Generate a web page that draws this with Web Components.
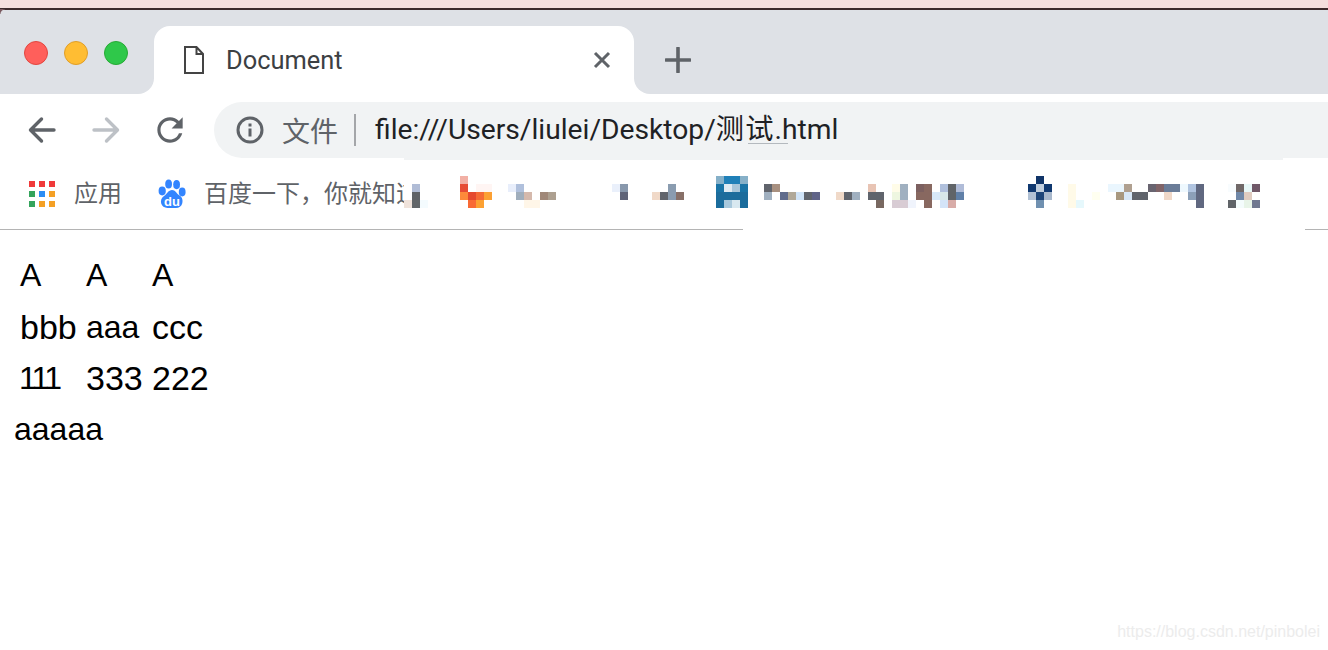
<!DOCTYPE html>
<html lang="zh">
<head>
<meta charset="utf-8">
<title>Document</title>
<style>
  html, body { margin: 0; padding: 0; background: #fff; }
  body { width: 1328px; height: 650px; overflow: hidden; font-family: "Liberation Sans", Arial, sans-serif; }
</style>
</head>
<body>
<browser-window>
  <tab-strip slot="strip" title-text="Document"></tab-strip>
  <nav-toolbar slot="toolbar" scheme="文件" url="file:///Users/liulei/Desktop/测试.html"></nav-toolbar>
  <bookmark-bar slot="bookmarks"></bookmark-bar>
  <demo-page></demo-page>
</browser-window>

<script>
function shadow(el, html) {
  const r = el.attachShadow({ mode: 'open' });
  r.innerHTML = html;
  return r;
}

class BrowserWindow extends HTMLElement {
  constructor() {
    super();
    shadow(this, `<style>
      :host { display: block; position: relative; width: 1328px; height: 650px; overflow: hidden; background: #fff; }
      .desk { height: 8px; background: #f5dfde; }
      .edge { height: 2px; background: #3d2a2c; }
      .frame { display: flex; flex-direction: column; }
      .corner { position: absolute; left: 0; top: 9px; width: 5px; height: 5px;
        background: radial-gradient(circle at 100% 100%, transparent 4px, #7a5a60 5px); }
      .mark { position: absolute; right: 8px; bottom: 9px; font: 16px/18px "Liberation Sans", sans-serif; color: #ececec; }
    </style>
    <div class="desk"></div><div class="edge"></div><div class="corner"></div>
    <div class="frame">
      <slot name="strip"></slot>
      <slot name="toolbar"></slot>
      <slot name="bookmarks"></slot>
      <slot></slot>
    </div>
    <div class="mark">https://blog.csdn.net/pinbolei</div>`);
  }
}

class TrafficLights extends HTMLElement {
  constructor() {
    super();
    shadow(this, `<style>
      :host { display: flex; gap: 16px; }
      i { display: block; width: 24px; height: 24px; border-radius: 50%; box-sizing: border-box; border: 1px solid; }
      .r { background: #ff5f5b; border-color: #e2463f; }
      .y { background: #ffbd33; border-color: #e09e28; }
      .g { background: #2fc84a; border-color: #27aa35; }
    </style><i class="r"></i><i class="y"></i><i class="g"></i>`);
  }
}

class TabStrip extends HTMLElement {
  constructor() {
    super();
    const t = this.getAttribute('title-text') || '';
    shadow(this, `<style>
      :host { display: flex; height: 84px; background: linear-gradient(#dee1e6 50%, #fff 50%); }
      .left { width: 154px; background: #dee1e6; border-bottom-right-radius: 16px; box-sizing: border-box; padding: 31px 0 0 24px; }
      .tab { width: 480px; margin-top: 16px; background: #fff; border-radius: 16px 16px 0 0; display: flex; align-items: center; box-sizing: border-box; padding: 0 22px 0 30px; color: #3c4043; }
      .tab svg.doc { flex: none; margin-right: 22px; }
      .name { flex: 1; font: 25.4px/34px Roboto, "Liberation Sans", sans-serif; white-space: nowrap; }
      .right { flex: 1; background: #dee1e6; border-bottom-left-radius: 16px; display: flex; align-items: center; padding: 16px 0 0 31px; box-sizing: border-box; }
    </style>
    <div class="left"><traffic-lights></traffic-lights></div>
    <div class="tab">
      <svg class="doc" width="20" height="28" viewBox="0 0 20 28"><path d="M1 1h11.5L19 8v19H1z M12.5 1v7H19" fill="none" stroke="#444" stroke-width="2"/></svg>
      <span class="name">${t}</span>
      <svg width="20" height="20" viewBox="0 0 20 20"><path d="M3 3l14 14M17 3L3 17" stroke="#5f6368" stroke-width="3" fill="none"/></svg>
    </div>
    <div class="right"><svg width="26" height="26" viewBox="0 0 26 26"><path d="M1 13h24M13 1v24" stroke="#5f6368" stroke-width="3.6" stroke-linecap="round" fill="none"/></svg></div>`);
  }
}

class NavToolbar extends HTMLElement {
  constructor() {
    super();
    const scheme = this.getAttribute('scheme') || '', url = this.getAttribute('url') || '';
    const urlHtml = url.replace(/[\u4e00-\u9fff]+/g, m => `<span class="cjk">${m}</span>`);
    shadow(this, `<style>
      :host { display: flex; height: 64px; align-items: flex-end; background: #fff; box-sizing: border-box; }
      .btns { display: flex; align-items: center; width: 214px; height: 56px; flex: none; box-sizing: border-box; padding-left: 27px; }
      .btns svg { display: block; flex: none; }
      .omni { flex: 1; height: 56px; background: #f1f3f4; border-radius: 28px 0 0 28px; display: flex; align-items: center; box-sizing: border-box; padding-left: 21px; }
      .scheme { margin-left: 17px; font: 28px/36px "Noto Sans CJK SC", sans-serif; color: #5f6368; white-space: nowrap; }
      .sep { width: 2px; height: 32px; background: #a4a6a9; margin: 0 19px 0 16px; flex: none; }
      .url { font: 28.2px/36px Roboto, "Noto Sans CJK SC", sans-serif; color: #202124; white-space: nowrap; padding-bottom: 1px; }
      .cjk { letter-spacing: 1.2px; }
    </style>
    <div class="btns">
      <svg width="30" height="28" viewBox="0 0 30 28"><path d="M27 14H4M14.5 3L3.5 14l11 11" fill="none" stroke="#5f6368" stroke-width="3.4" stroke-linecap="round" stroke-linejoin="round"/></svg>
      <svg style="margin-left:34px" width="30" height="28" viewBox="0 0 30 28"><path d="M3 14h23M15.5 3l11 11-11 11" fill="none" stroke="#bdc1c6" stroke-width="3.4" stroke-linecap="round" stroke-linejoin="round"/></svg>
      <svg style="margin-left:30px" width="38" height="38" viewBox="0 0 24 24"><path fill="#5f6368" d="M17.65 6.35C16.2 4.9 14.21 4 12 4c-4.42 0-7.99 3.58-7.99 8s3.57 8 7.99 8c3.73 0 6.84-2.55 7.73-6h-2.08c-.82 2.33-3.04 4-5.65 4-3.31 0-6-2.69-6-6s2.69-6 6-6c1.66 0 3.14.69 4.22 1.78L13 11h7V4l-2.35 2.35z"/></svg>
    </div>
    <div class="omni">
      <svg width="30" height="30" viewBox="0 0 30 30" style="flex:none"><circle cx="15" cy="15" r="12" fill="none" stroke="#5f6368" stroke-width="3"/><rect x="13.5" y="8.5" width="3" height="3" fill="#5f6368"/><rect x="13.5" y="13.5" width="3" height="8" fill="#5f6368"/></svg>
      <span class="scheme">${scheme}</span>
      <span class="sep"></span>
      <span class="url">${urlHtml}</span>
    </div>`);
  }
}

class AppsIcon extends HTMLElement {
  constructor() {
    super();
    const c = ['#f03a3a','#f03a3a','#f03a3a','#34a45c','#2c8df4','#f4a025','#34a45c','#f4a025','#f4a025'];
    shadow(this, `<style>
      :host { display: grid; grid-template-columns: repeat(3, 6px); grid-auto-rows: 6px; gap: 4px; flex: none; }
      i { display: block; }
    </style>` + c.map(x => `<i style="background:${x}"></i>`).join(''));
  }
}

class MosaicPatch extends HTMLElement {
  constructor() {
    super();
    const W = 1328, H = 240;
    const cells = [
      [404,200,'#efe2da'],[412,184,'#b0bcd6'],[412,192,'#5f6368'],[412,200,'#616568'],[420,200,'#f4fbfe'],
      [460,176,'#f2b0a5'],[460,184,'#e64c35'],[476,184,'#fff5f3'],[484,184,'#fff5f3'],[460,192,'#fd8a3a'],[468,192,'#e5492f'],[476,192,'#f56a35'],[484,192,'#fca033'],[468,200,'#f96a35'],[476,200,'#fca133'],
      [508,184,'#e8eefb'],[516,184,'#b0c0dc'],[516,192,'#a0aebc'],[524,192,'#d5b9ac'],[540,192,'#a08878'],[548,192,'#ada090'],[524,200,'#fff6e8'],[532,200,'#fff6e8'],
      [612,184,'#eaf0fb'],[620,184,'#8898ac'],[620,192,'#5f6478'],
      [652,192,'#f0d9c8'],[660,192,'#60646c'],[668,184,'#8a9cb0'],[668,192,'#8a9cb0'],[676,192,'#887068'],
      [716,176,'#86b0c8'],[724,176,'#2080b8'],[732,176,'#2080b8'],[740,176,'#86b0c8'],
      [716,184,'#1a74a6'],[724,184,'#dfeaf2'],[732,184,'#a8c6da'],[740,184,'#1a74a6'],
      [716,192,'#1c6c9c'],[724,192,'#1c6c9c'],[732,192,'#1c6c9c'],[740,192,'#1c6c9c'],
      [716,200,'#1a6c9c'],[724,200,'#a8c8dc'],[732,200,'#d8e8f0'],[740,200,'#1a6c9c'],
      [764,184,'#60646c'],[772,184,'#a89080'],[764,192,'#a0b0c0'],[780,192,'#606c8c'],[788,192,'#b0a898'],[796,192,'#d0e4f8'],[804,192,'#60646c'],[812,192,'#606488'],
      [836,192,'#f0d9c8'],[844,192,'#60646c'],[852,192,'#a0b0c0'],
      [868,184,'#e8c4b4'],[868,192,'#60646c'],[876,192,'#60646c'],[876,200,'#786860'],
      [892,184,'#fffce8'],[900,184,'#a0b0c0'],[892,192,'#eef6e0'],[900,192,'#a0b0c0'],[892,200,'#d8ccd4'],[900,200,'#d8ccd4'],[908,200,'#f0f4fc'],
      [916,184,'#7c6060'],[924,184,'#886860'],[916,192,'#886860'],[924,192,'#886860'],[932,192,'#d8e8f8'],[940,192,'#d8e8e8'],[924,200,'#886860'],
      [940,184,'#b0c0dc'],[948,184,'#606468'],[956,184,'#b0bcd8'],[948,192,'#606468'],[956,192,'#6080a8'],[940,200,'#d4e4f8'],[948,200,'#d8aca8'],
      [1036,176,'#103468'],[1028,184,'#103870'],[1036,184,'#c0cede'],[1044,184,'#103870'],[1028,192,'#b0c0d4'],[1036,192,'#1c4478'],[1044,192,'#a8b8cc'],[1036,200,'#7090b0'],
      [1068,184,'#fffae8'],[1068,192,'#fffae8'],[1068,200,'#fffae8'],[1076,200,'#e6f8fc'],[1092,192,'#fffff0'],
      [1108,184,'#eaf6fe'],[1116,184,'#eaf6fe'],[1124,184,'#b0a090'],[1116,192,'#a89880'],[1124,192,'#d8e8f8'],[1132,192,'#60646c'],[1140,192,'#60646c'],
      [1148,184,'#686470'],[1156,184,'#806468'],[1164,184,'#6a7c98'],[1172,184,'#6a7c98'],[1180,184,'#eef8fe'],[1188,184,'#b0c4e0'],[1196,184,'#606880'],
      [1164,192,'#f0d8c8'],[1188,192,'#8ca0b8'],[1196,192,'#606880'],[1196,200,'#606880'],
      [1228,184,'#f8fcfe'],[1236,184,'#706868'],[1244,184,'#e8f8f8'],[1252,184,'#705868'],
      [1236,192,'#7088a8'],[1244,192,'#e0ccc0'],
      [1228,200,'#606468'],[1236,200,'#f4fcfc'],[1244,200,'#e8f4e8'],[1252,200,'#707890']
    ];
    shadow(this, `<style>
      :host { position: absolute; left: 0; top: 0; display: block; width: ${W}px; height: ${H}px; pointer-events: none; }
      svg { display: block; }
    </style>
    <svg width="${W}" height="${H}" viewBox="0 0 ${W} ${H}">
      <rect x="748" y="143" width="40" height="1" fill="#9aa0a6" opacity=".7"/>
      <rect x="404" y="158" width="879" height="2" fill="#f1f3f4"/>
      <rect x="404" y="160" width="879" height="69" fill="#fff"/>
      <rect x="743" y="229" width="562" height="2" fill="#fff"/>
      <g shape-rendering="crispEdges" style="filter:blur(.45px)">${cells.map(c => `<rect x="${c[0]}" y="${c[1]}" width="8" height="8" fill="${c[2]}"/>`).join('')}</g>
    </svg>`);
  }
}

class BookmarkBar extends HTMLElement {
  constructor() {
    super();
    shadow(this, `<style>
      :host { display: flex; align-items: center; height: 72px; box-sizing: border-box; border-bottom: 1px solid #b4b4b4; padding-left: 29px; background: #fff; color: #5f6368; }
      .t { font: 24px/34px "Noto Sans CJK SC", sans-serif; white-space: nowrap; margin-bottom: 4px; }
      apps-icon { margin-right: 19px; }
      .paw { flex: none; margin: 0 18px 0 36px; display: block; }
    </style>
    <apps-icon></apps-icon><span class="t">应用</span>
    <svg class="paw" width="28" height="30" viewBox="0 0 28 30">
      <g fill="#3385ff">
        <ellipse cx="4.2" cy="12" rx="3.6" ry="4.4"/>
        <ellipse cx="10.6" cy="5" rx="3.4" ry="4.6"/>
        <ellipse cx="18.6" cy="5.6" rx="3.4" ry="4.6"/>
        <ellipse cx="24.2" cy="13" rx="3.4" ry="4.4"/>
        <path d="M14 11c3.4 0 4.6 3.6 7.6 5.6 3 2 3.4 5 2.6 8-.8 3-3.2 4.4-6.2 4.4H9.6c-3.4 0-5.6-1.6-6.4-4.4-.8-3 .2-5.8 2.8-7.6C9 15 10.4 11 14 11z"/>
      </g>
      <text x="14" y="27" text-anchor="middle" font-family="Liberation Sans, sans-serif" font-size="13" font-weight="700" fill="#fff">du</text>
    </svg>
    <span class="t">百度一下，你就知道</span>
    <mosaic-patch></mosaic-patch>`);
  }
}

class DemoPage extends HTMLElement {
  constructor() {
    super();
    const rows = [
      [['A',''],['A',''],['A','']],
      [['bbb','w'],['aaa',''],['ccc','w']],
      [['111','o'],['333','w'],['222','w']]
    ];
    shadow(this, `<style>
      :host { display: block; padding: 27px 0 0 14px; font: 32px/37px "Liberation Sans", Arial, sans-serif; color: #000; }
      table { border-collapse: separate; border-spacing: 0 14.4px; margin: -14.4px 0 0 6px; table-layout: fixed; width: 198px; }
      td { padding: 0; width: 66px; white-space: nowrap; }
      tr:first-child td { padding-bottom: 1px; }
      .w { font-size: 34px; }
      .o { font-kerning: none; letter-spacing: -5.2px; text-indent: -1px; }
    </style>
    <table>${rows.map(r => `<tr>${r.map(c => `<td class="${c[1]}">${c[0]}</td>`).join('')}</tr>`).join('')}</table>
    <div>aaaaa</div>`);
  }
}

customElements.define('traffic-lights', TrafficLights);
customElements.define('apps-icon', AppsIcon);
customElements.define('mosaic-patch', MosaicPatch);
customElements.define('tab-strip', TabStrip);
customElements.define('nav-toolbar', NavToolbar);
customElements.define('bookmark-bar', BookmarkBar);
customElements.define('demo-page', DemoPage);
customElements.define('browser-window', BrowserWindow);
</script>
</body>
</html>
